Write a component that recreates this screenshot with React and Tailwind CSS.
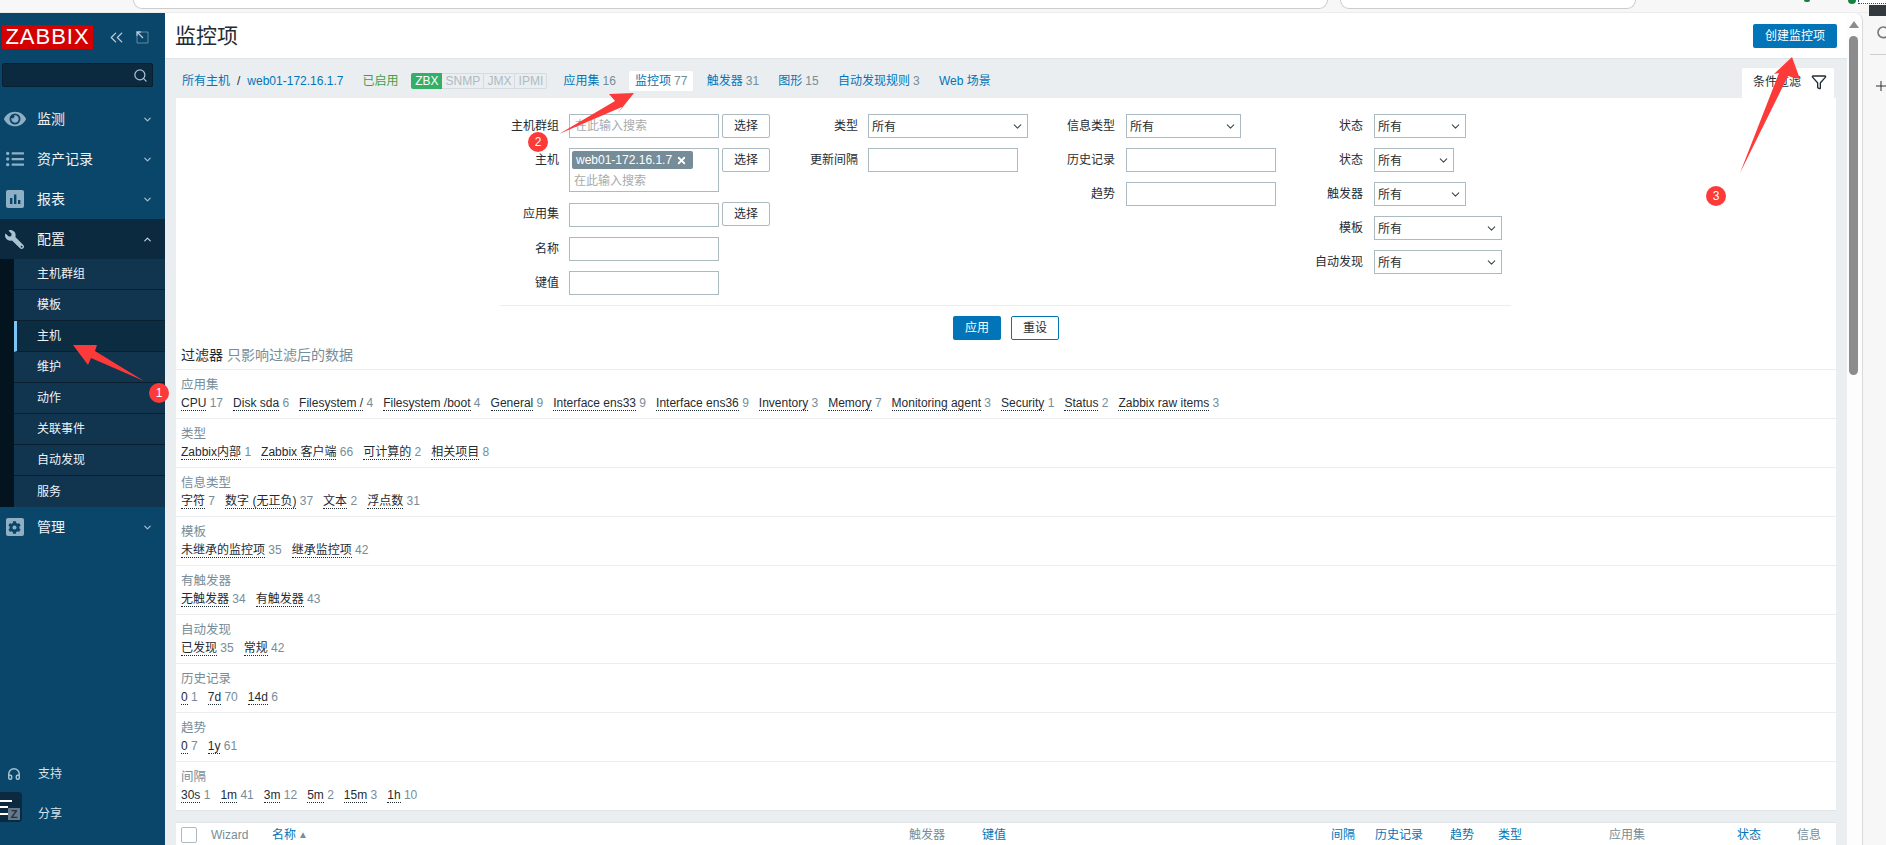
import { ChevronDown, ChevronUp, ChevronsLeft, Search, Headphones, Funnel, Plus, X } from "lucide-react";
import { FaEye, FaListUl, FaWrench, FaCog } from "react-icons/fa";

const subMenu = ["主机群组", "模板", "主机", "维护", "动作", "关联事件", "自动发现", "服务"];

const hostTabs = [
  { name: "应用集", count: 16 },
  { name: "监控项", count: 77, active: true },
  { name: "触发器", count: 31 },
  { name: "图形", count: 15 },
  { name: "自动发现规则", count: 3 },
  { name: "Web 场景" },
];

const subfilters = [
  { title: "应用集", items: [["CPU", 17], ["Disk sda", 6], ["Filesystem /", 4], ["Filesystem /boot", 4], ["General", 9], ["Interface ens33", 9], ["Interface ens36", 9], ["Inventory", 3], ["Memory", 7], ["Monitoring agent", 3], ["Security", 1], ["Status", 2], ["Zabbix raw items", 3]] },
  { title: "类型", items: [["Zabbix内部", 1], ["Zabbix 客户端", 66], ["可计算的", 2], ["相关项目", 8]] },
  { title: "信息类型", items: [["字符", 7], ["数字 (无正负)", 37], ["文本", 2], ["浮点数", 31]] },
  { title: "模板", items: [["未继承的监控项", 35], ["继承监控项", 42]] },
  { title: "有触发器", items: [["无触发器", 34], ["有触发器", 43]] },
  { title: "自动发现", items: [["已发现", 35], ["常规", 42]] },
  { title: "历史记录", items: [["0", 1], ["7d", 70], ["14d", 6]] },
  { title: "趋势", items: [["0", 7], ["1y", 61]] },
  { title: "间隔", items: [["30s", 1], ["1m", 41], ["3m", 12], ["5m", 2], ["15m", 3], ["1h", 10]] },
];

const tableHead = [
  { name: "Wizard", w: "w-[61px]" },
  { name: "名称", w: "w-[637px]", link: true, sort: true },
  { name: "触发器", w: "w-[73px]" },
  { name: "键值", w: "w-[349px]", link: true },
  { name: "间隔", w: "w-[44px]", link: true },
  { name: "历史记录", w: "w-[75px]", link: true },
  { name: "趋势", w: "w-[48px]", link: true },
  { name: "类型", w: "w-[111px]", link: true },
  { name: "应用集", w: "w-[128px]" },
  { name: "状态", w: "w-[60px]", link: true },
  { name: "信息", w: "w-[36px]" },
];

const ReportIcon = () => (
  <svg width="18" height="18" viewBox="0 0 18 18">
    <rect width="18" height="18" rx="2" fill="#8fb0c4" />
    <rect x="4" y="8" width="2.4" height="6" fill="#0a466a" />
    <rect x="8" y="4.5" width="2.4" height="9.5" fill="#0a466a" />
    <rect x="12" y="10" width="2.4" height="4" fill="#0a466a" />
  </svg>
);

const GearIcon = () => (
  <div className="flex h-[18px] w-[18px] items-center justify-center rounded-[2px] bg-[#8fb0c4] text-[#0a466a]">
    <FaCog size={13} />
  </div>
);

const ExpandIcon = () => (
  <svg width="13" height="13" viewBox="0 0 13 13" fill="none" stroke="#b9ccd8">
    <path d="M5.5 1H12V12H1V5.5" strokeDasharray="1 1" />
    <path d="M7 7L1.5 1.5M1 5V1H5" strokeWidth="1.3" />
  </svg>
);

const MenuItem = ({ icon, label, active }) => (
  <div className={`flex h-10 items-center ${active ? "bg-[#0b2a3f]" : ""}`}>
    <div className="flex w-[28px] justify-center pl-[1px]">{icon}</div>
    <span className="ml-[9px] flex-1 text-sm text-[#eef3f6]">{label}</span>
    {active ? (
      <ChevronUp size={11} strokeWidth={2.5} className="mr-[12px] text-[#c9d8e2]" />
    ) : (
      <ChevronDown size={11} strokeWidth={2.5} className="mr-[12px] text-[#a9c2d1]" />
    )}
  </div>
);

const Sidebar = () => (
  <aside className="relative flex w-[165px] shrink-0 flex-col bg-[#0a466a]">
    <div className="flex items-center pl-[2px] pt-[12px]">
      <div className="flex h-6 w-[91px] items-center justify-center bg-[#d40000] text-[22px] leading-none tracking-[1px] text-white">
        ZABBIX
      </div>
      <ChevronsLeft size={21} strokeWidth={1.5} className="ml-[13px] text-[#b9ccd8]" />
      <div className="ml-[9px]">
        <ExpandIcon />
      </div>
    </div>

    <div className="ml-[2px] mt-[14px] flex h-6 w-[151px] items-center justify-end rounded-[2px] border border-[#07202f] bg-[#0c2a3f] pr-[4px]">
      <Search size={15} className="text-[#a9c2d1]" />
    </div>

    <nav className="mt-[12px]">
      <MenuItem icon={<FaEye size={22} className="text-[#8fb0c4]" />} label="监测" />
      <MenuItem icon={<FaListUl size={18} className="text-[#8fb0c4]" />} label="资产记录" />
      <MenuItem icon={<ReportIcon />} label="报表" />
      <MenuItem icon={<FaWrench size={19} className="scale-x-[-1] text-[#a9c2d1]" />} label="配置" active />
      <div className="border-l-[14px] border-[#04141f]">
        {subMenu.map((item) => (
          <div
            key={item}
            className={`flex h-[31px] items-center border-b border-[#0a2030] pl-[23px] text-xs text-[#eef3f6] last:border-b-0 ${
              item === "主机"
                ? "border-l-[3px] border-l-[#7cc4f4] bg-[#0c2c42] !pl-[20px]"
                : "bg-[#11344f]"
            }`}
          >
            {item}
          </div>
        ))}
      </div>
      <MenuItem icon={<GearIcon />} label="管理" />
    </nav>

    <div className="mt-auto pb-[11px]">
      <div className="flex h-10 items-center text-xs text-[#d5e3ec]">
        <div className="flex w-[28px] justify-center">
          <Headphones size={14} strokeWidth={2.5} className="text-[#a9c2d1]" />
        </div>
        <span className="ml-[10px]">支持</span>
      </div>
      <div className="flex h-10 items-center text-xs text-[#d5e3ec]">
        <span className="ml-[38px]">分享</span>
      </div>
    </div>

    {/* widget stuck over the bottom of the menu */}
    <div className="absolute bottom-[23px] left-0 h-[30px] w-[22px] rounded-r-[4px] bg-[#0b2a3f]">
      <div className="mt-[8px] h-[2px] w-[12px] bg-white" />
      <div className="mt-[4px] h-[2px] w-[8px] bg-white" />
      <div className="mt-[5px] h-[2px] w-[12px] bg-white" />
      <div className="absolute bottom-[2px] left-[8px] flex h-[12px] w-[12px] items-center justify-center bg-[#66798a] text-[11px] font-bold leading-none text-[#20323f]">
        Z
      </div>
    </div>
  </aside>
);

const Label = ({ w, gap, children }) => (
  <span className={`h-6 shrink-0 text-right leading-6 text-[#1f2c33] ${w} ${gap}`}>{children}</span>
);

const TextBox = ({ w, placeholder }) => (
  <input
    placeholder={placeholder}
    className={`h-6 border border-[#acbbc2] bg-white px-[5px] text-xs outline-none placeholder:text-[#aaaaaa] ${w}`}
  />
);

const PickButton = () => (
  <button className="ml-[3px] h-6 w-[48px] rounded-[2px] border border-[#acbbc2] bg-white text-xs text-[#1f2c33]">
    选择
  </button>
);

const SelectBox = ({ w }) => (
  <div className={`flex h-6 items-center justify-between border border-[#acbbc2] bg-white pl-[3px] pr-[3px] text-[#1f2c33] ${w}`}>
    <span className="pt-[2px]">所有</span>
    <ChevronDown size={13} strokeWidth={2} className="text-[#3a4a54]" />
  </div>
);

const FilterForm = () => (
  <div className="ml-[324px] w-[1011px]">
    <div className="flex pt-4 text-xs">
      <div className="flex w-[270px] flex-col">
        <div className="flex">
          <Label w="w-[59px]" gap="mr-[10px]">主机群组</Label>
          <TextBox w="w-[150px]" placeholder="在此输入搜索" />
          <PickButton />
        </div>
        <div className="mt-[10px] flex">
          <Label w="w-[59px]" gap="mr-[10px]">主机</Label>
          <div className="h-[44px] w-[150px] border border-[#acbbc2] bg-white pl-[2px] pt-[2px]">
            <div className="flex h-[18px] w-[121px] items-center justify-between rounded-[2px] bg-[#768d99] pl-[4px] pr-[6px] text-white">
              <span>web01-172.16.1.7</span>
              <X size={11} strokeWidth={4} />
            </div>
            <div className="mt-[4px] pl-[2px] leading-[17px] text-[#aaaaaa]">在此输入搜索</div>
          </div>
          <PickButton />
        </div>
        <div className="mt-[10px] flex items-start">
          <Label w="w-[59px]" gap="mr-[10px]">应用集</Label>
          <TextBox w="mt-px w-[150px]" />
          <PickButton />
        </div>
        <div className="mt-[10px] flex">
          <Label w="w-[59px]" gap="mr-[10px]">名称</Label>
          <TextBox w="w-[150px]" />
        </div>
        <div className="mt-[10px] flex">
          <Label w="w-[59px]" gap="mr-[10px]">键值</Label>
          <TextBox w="w-[150px]" />
        </div>
      </div>

      <div className="flex w-[258px] flex-col gap-[10px]">
        <div className="flex">
          <Label w="w-[88px]" gap="mr-[10px]">类型</Label>
          <SelectBox w="w-[160px]" />
        </div>
        <div className="flex">
          <Label w="w-[88px]" gap="mr-[10px]">更新间隔</Label>
          <TextBox w="w-[150px]" />
        </div>
      </div>

      <div className="flex w-[247px] flex-col gap-[10px]">
        <div className="flex">
          <Label w="w-[87px]" gap="mr-[11px]">信息类型</Label>
          <SelectBox w="w-[115px]" />
        </div>
        <div className="flex">
          <Label w="w-[87px]" gap="mr-[11px]">历史记录</Label>
          <TextBox w="w-[150px]" />
        </div>
        <div className="flex">
          <Label w="w-[87px]" gap="mr-[11px]">趋势</Label>
          <TextBox w="w-[150px]" />
        </div>
      </div>

      <div className="flex flex-col gap-[10px]">
        <div className="flex">
          <Label w="w-[88px]" gap="mr-[11px]">状态</Label>
          <SelectBox w="w-[92px]" />
        </div>
        <div className="flex">
          <Label w="w-[88px]" gap="mr-[11px]">状态</Label>
          <SelectBox w="w-[80px]" />
        </div>
        <div className="flex">
          <Label w="w-[88px]" gap="mr-[11px]">触发器</Label>
          <SelectBox w="w-[92px]" />
        </div>
        <div className="flex">
          <Label w="w-[88px]" gap="mr-[11px]">模板</Label>
          <SelectBox w="w-[128px]" />
        </div>
        <div className="flex">
          <Label w="w-[88px]" gap="mr-[11px]">自动发现</Label>
          <SelectBox w="w-[128px]" />
        </div>
      </div>
    </div>

    <div className="mt-[10px] border-t border-[#ebeef0] pt-[10px]">
      <div className="ml-[453px] flex gap-[10px] text-xs">
        <button className="h-6 w-[48px] rounded-[2px] bg-[#0275b8] text-white">应用</button>
        <button className="h-6 w-[48px] rounded-[2px] border border-[#0275b8] bg-white text-[#1f2c33]">重设</button>
      </div>
    </div>
  </div>
);

const Subfilters = () => (
  <div>
    <div className="flex h-[29px] items-center pl-[5px] pt-[1px] text-sm">
      <span className="text-[#1f2c33]">过滤器</span>
      <span className="ml-[4px] text-[#768d99]">只影响过滤后的数据</span>
    </div>
    {subfilters.map((group) => (
      <div key={group.title} className="h-[49px] border-t border-[#ebeef0] pl-[5px] pt-[8px] text-xs">
        <div className="h-[15px] text-[12.5px] leading-[15px] text-[#768d99]">{group.title}</div>
        <div className="mt-[3px] flex gap-[10px]">
          {group.items.map(([name, count], i) => (
            <div key={i} className="leading-[14px] text-[#768d99]">
              <span className="inline-block border-b border-dotted border-[#1f2c33] text-[#1f2c33]">{name}</span>{" "}
              {count}
            </div>
          ))}
        </div>
      </div>
    ))}
  </div>
);

const Content = () => (
  <main className="flex min-w-0 flex-1 flex-col bg-[#ebeef0]">
    <header className="flex h-[46px] shrink-0 items-center justify-between border-b border-[#dfe4e7] bg-white pl-[10px] pr-[10px]">
      <h1 className="text-[21px] font-normal text-[#1f2c33]">监控项</h1>
      <button className="h-6 w-[84px] rounded-[2px] bg-[#0275b8] text-xs text-white">创建监控项</button>
    </header>

    <div className="flex h-[39px] shrink-0 items-end text-xs">
      <div className="flex h-[39px] items-center pl-[17px] pt-[5px]">
        <span className="text-[#0275b8]">所有主机</span>
        <span className="ml-[7px] text-[#1f2c33]">/</span>
        <span className="ml-[7px] text-[#0275b8]">web01-172.16.1.7</span>
        <span className="ml-[19px] text-[#429e47]">已启用</span>
        <div className="ml-[13px] flex h-4 items-center text-[#acbbc2]">
          <span className="flex h-4 w-[31px] items-center justify-center rounded-l-[2px] bg-[#34af67] text-white">ZBX</span>
          <span className="flex h-4 w-[41px] items-center justify-center border-y border-[#d5dbde]">SNMP</span>
          <span className="flex h-4 w-[32px] items-center justify-center border border-[#d5dbde]">JMX</span>
          <span className="flex h-4 w-[32px] items-center justify-center rounded-r-[2px] border-y border-r border-[#d5dbde]">IPMI</span>
        </div>
        <div className="ml-[10px] flex gap-[7.25px]">
          {hostTabs.map((tab) => (
            <div
              key={tab.name}
              className={`flex h-5 items-center rounded-[2px] px-[6px] ${tab.active ? "bg-white" : ""}`}
            >
              <span className="text-[#0275b8]">{tab.name}</span>
              {tab.count && <span className="ml-[3px] text-[#768d99]">{tab.count}</span>}
            </div>
          ))}
        </div>
      </div>
      <div className="ml-auto mr-[13px] flex h-[30px] w-[92px] items-center rounded-t-[2px] bg-white pb-[2px] pl-[11px] text-[#1f2c33]">
        <span>条件过滤</span>
        <Funnel size={16} strokeWidth={2} className="ml-[10px] text-[#1f2c33]" />
      </div>
    </div>

    <section className="mx-[11px] shrink-0 border-b border-[#dfe4e7] bg-white">
      <FilterForm />
      <Subfilters />
    </section>

    <section className="mx-[11px] mt-[11px] flex-1 border-t border-[#dfe4e7] bg-white">
      <div className="flex items-center pl-[5px] pt-[4px] text-xs">
        <div className="mr-[14px] h-4 w-4 rounded-[2px] border border-[#acbbc2]" />
        {tableHead.map((col) => (
          <div key={col.name} className={`flex shrink-0 items-center leading-4 ${col.w} ${col.link ? "text-[#0275b8]" : "text-[#768d99]"}`}>
            {col.name}
            {col.sort && <span className="ml-[2px] text-[10px] text-[#768d99]">▲</span>}
          </div>
        ))}
      </div>
    </section>
  </main>
);

const Scrollbar = () => (
  <div className="flex w-4 shrink-0 flex-col items-center rounded-tr-[8px] border-r border-[#d9d9d9] bg-[#fdfdfd] pr-[2px] pt-[8px]">
    <div className="h-0 w-0 border-x-[5px] border-b-[7px] border-x-transparent border-b-[#8c8c8c]" />
    <div className="mt-[8px] h-[339px] w-[9px] rounded-full bg-[#8c8c8c]" />
  </div>
);

const BrowserSide = () => (
  <div className="w-[23px] shrink-0 overflow-hidden bg-[#f7f7f7] text-[#555555]">
    <Search size={16} strokeWidth={2.4} className="ml-[13px] mt-[12px] text-[#777777]" />
    <div className="ml-[7px] mt-[13px] h-px bg-[#cfcfcf]" />
    <Plus size={16} strokeWidth={1.4} className="ml-[10px] mt-[23px] text-[#222222]" />
  </div>
);

const BrowserStrip = () => (
  <div className="relative flex h-[13px] shrink-0 border-b border-[#ececec] bg-[#f7f7f7]">
    <div className="ml-[133px] h-[9px] w-[1195px] rounded-b-[10px] border-x border-b border-[#cccccc] bg-white" />
    <div className="ml-[12px] h-[9px] w-[296px] rounded-b-[10px] border-x border-b border-[#cccccc] bg-white" />
    <div className="absolute left-[1848px] top-0 h-[4px] w-[8px] rounded-b-full bg-[#16803c]" />
    <div className="absolute left-[1804px] top-0 h-[2px] w-[6px] rounded-b-full bg-[#16803c]" />
    <div className="absolute left-[1858px] top-0 h-[4px] w-[28px] border-b border-l border-dotted border-[#1a4f8a] bg-white" />
    <div className="absolute left-[1869px] top-[5px] h-[11px] w-[17px] bg-[#33393d]" />
  </div>
);

// the red marks someone drew on the screenshot
const Annotations = () => (
  <svg className="pointer-events-none absolute left-0 top-0" width="1886" height="845">
    <g fill="#fc3a3a">
      <polygon points="73,345 97,345 95,351 144,381 91,358 88,365" />
      <polygon points="634,93 609,94 615,101 559,134 622,107 618,113" />
      <polygon points="1792,57 1800,79 1788,76 1740,173 1779,73 1774,74" />
      <circle cx="159" cy="393" r="10" />
      <circle cx="538" cy="142" r="10" />
      <circle cx="1716" cy="196" r="10" />
    </g>
    <g fill="#ffffff" fontSize="12" textAnchor="middle">
      <text x="159" y="397">1</text>
      <text x="538" y="146">2</text>
      <text x="1716" y="200">3</text>
    </g>
  </svg>
);

export default function App() {
  return (
    <div className="relative flex h-screen w-screen flex-col overflow-hidden bg-[#f7f7f7] font-['Liberation_Sans','Noto_Sans_CJK_SC',sans-serif]">
      <BrowserStrip />
      <div className="flex min-h-0 flex-1">
        <Sidebar />
        <Content />
        <Scrollbar />
        <BrowserSide />
      </div>
      <Annotations />
    </div>
  );
}
